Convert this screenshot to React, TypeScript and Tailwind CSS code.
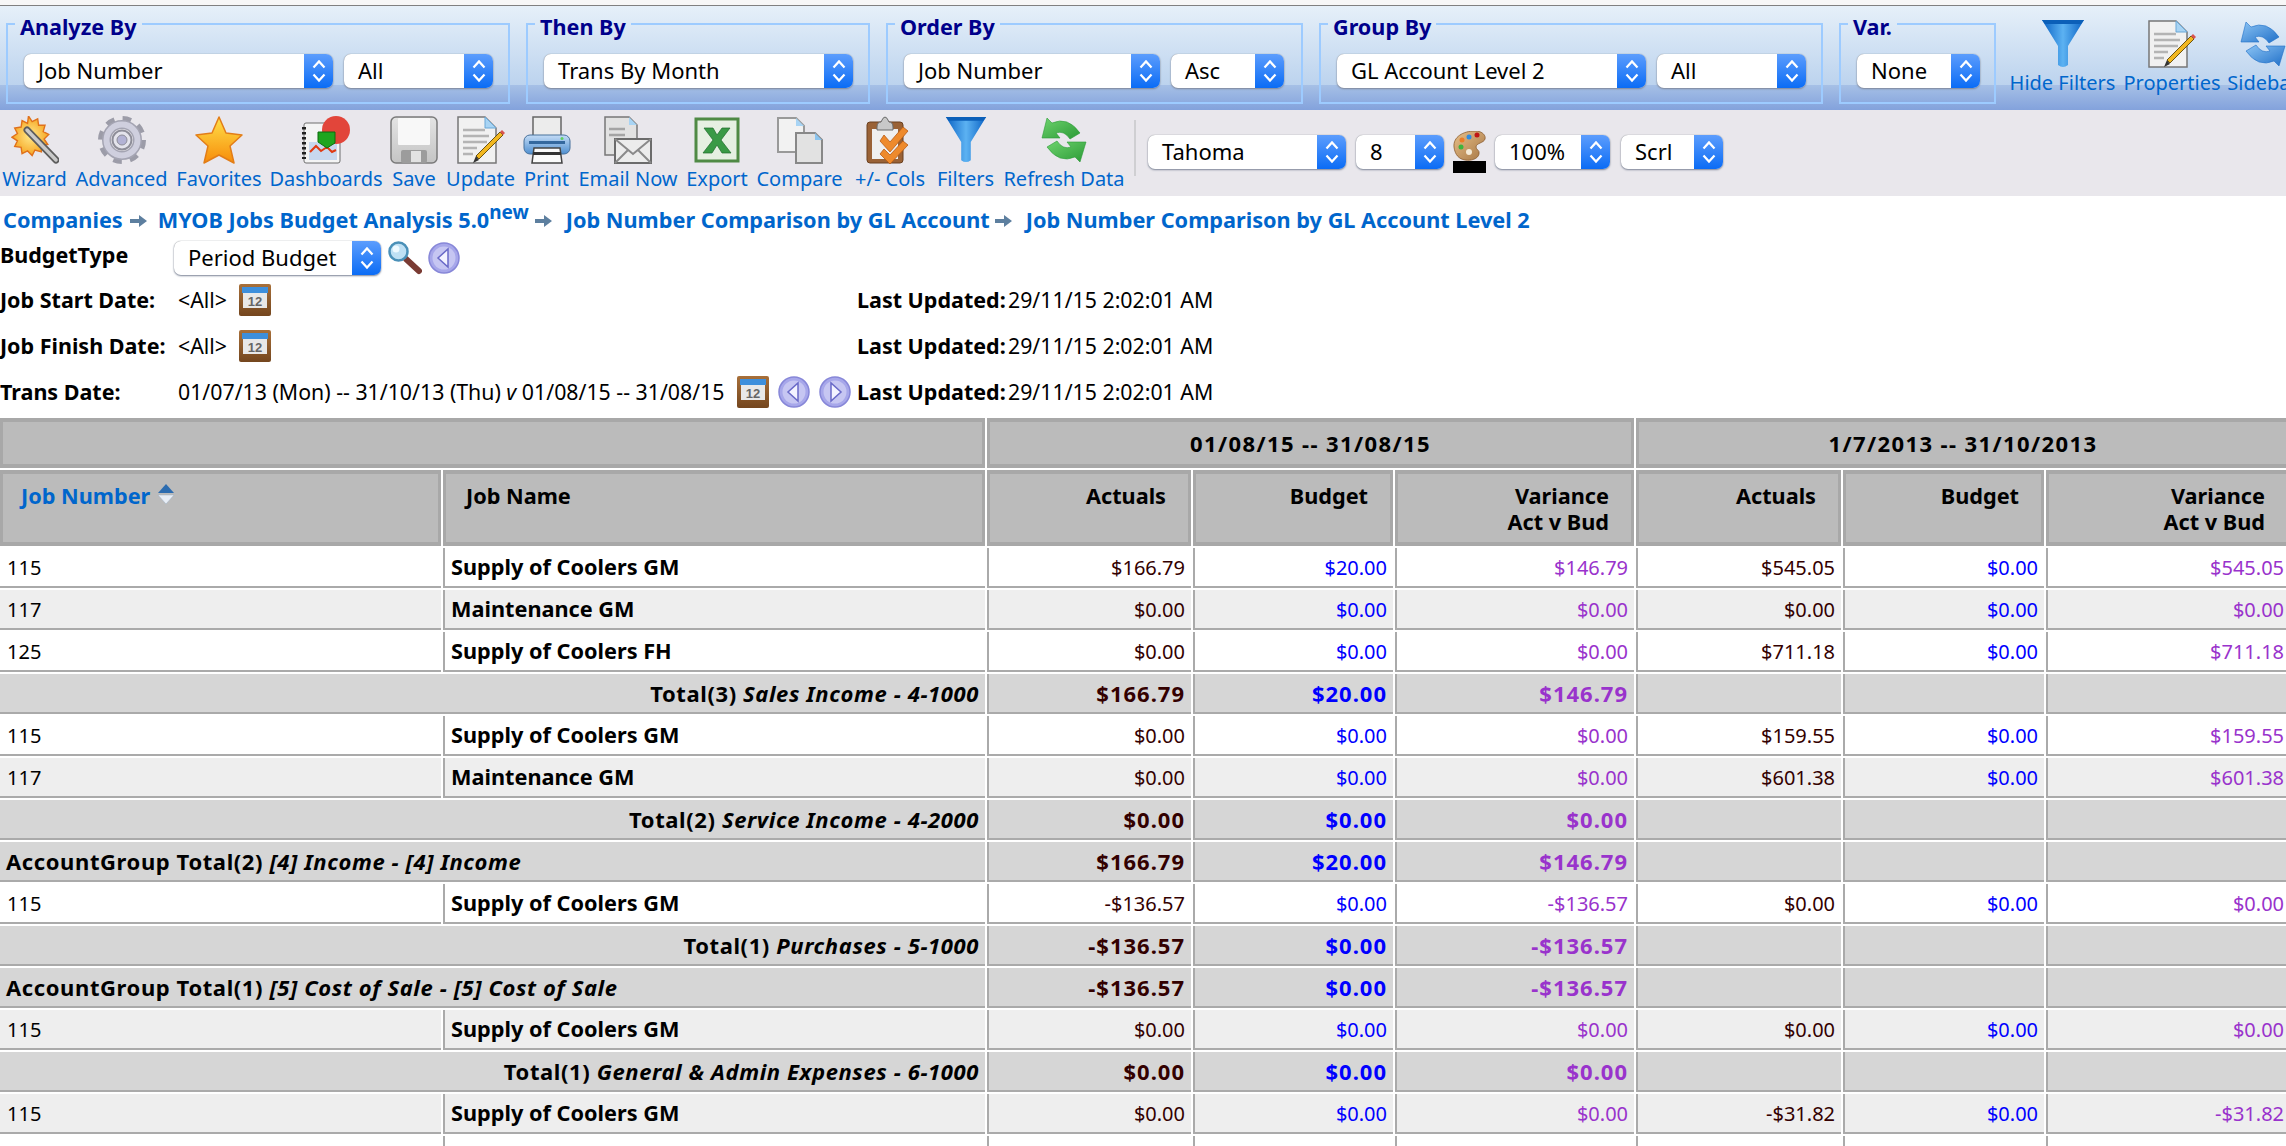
import type { ReactNode } from "react";

const Chevrons = () => (
  <svg viewBox="0 0 16 26" className="w-[16px] h-[26px]" fill="none" stroke="#fff" strokeWidth="2.2">
    <path d="M2.5 9.5 8 3.5l5.5 6M2.5 16.5 8 22.5l5.5-6" />
  </svg>
);

function Select({ label, className }: { label: string; className: string }) {
  return (
    <div className={`flex h-[34px] shrink-0 rounded-[7px] bg-white shadow-[0_1px_2px_#7d8699,0_0_1px_#8a8a8a] overflow-hidden ${className}`}>
      <span className="flex-1 pl-[14px] text-[22px] leading-[32px] text-black whitespace-nowrap overflow-hidden">{label}</span>
      <span className="w-[29px] flex items-center justify-center bg-[linear-gradient(180deg,#5c9dfd,#0b6cf5)]">
        <Chevrons />
      </span>
    </div>
  );
}

function Group({ title, width, children }: { title: string; width: string; children: ReactNode }) {
  return (
    <fieldset className={`${width} h-[95px] min-w-0 shrink-0 border-2 border-[#9dcbff] pl-[16px] pt-[15px] flex`}>
      <legend className="-ml-[9px] px-[5px] pt-[6px] text-[21.6px] leading-[24px] font-bold text-[#00008b] whitespace-nowrap">{title}</legend>
      <div className="flex gap-[11px]">{children}</div>
    </fieldset>
  );
}

const FunnelIcon = ({ size = 48 }: { size?: number }) => (
  <svg viewBox="0 0 48 48" width={size} height={size}>
    <defs>
      <linearGradient id="fun" x1="0" x2="1" y1="0" y2="0">
        <stop offset="0" stopColor="#0a62c4" />
        <stop offset=".5" stopColor="#5cb2f2" />
        <stop offset="1" stopColor="#0a62c4" />
      </linearGradient>
    </defs>
    <path d="M3 0h42L29 26v19q-5 4-10 0V26Z" fill="url(#fun)" />
    <path d="M3 0h42l-3 4H6Z" fill="#0b5fb8" />
  </svg>
);

const WizardIcon = () => (
  <svg viewBox="0 0 48 48" width="48" height="48">
    <defs>
      <radialGradient id="wz"><stop offset="0" stopColor="#ffe98a" /><stop offset="1" stopColor="#f6a623" /></radialGradient>
    </defs>
    <path d="M19 0l4 6 6-3 1 7 7 0-2 7 6 3-5 5 4 6-7 1 0 7-7-2-3 6-5-5-6 3-1-7-7-1 3-6-6-4 6-4-3-6 7-1 1-7 6 3Z" fill="url(#wz)" stroke="#e0711b" strokeWidth="1.5" transform="scale(.92)" />
    <path d="M16 14 45 44" stroke="#5d5d5d" strokeWidth="7" strokeLinecap="round" />
    <path d="M16 14 45 44" stroke="#c9c9c9" strokeWidth="3.5" strokeLinecap="round" />
  </svg>
);

const GearIcon = () => (
  <svg viewBox="0 0 48 48" width="48" height="48" fill="none">
    <circle cx="24" cy="24" r="20" stroke="#9c9ca8" strokeWidth="8" strokeDasharray="8 7.7" />
    <circle cx="24" cy="24" r="15.5" stroke="#a4a4b2" strokeWidth="9" />
    <circle cx="24" cy="24" r="15.5" stroke="#cfcfde" strokeWidth="6" />
    <circle cx="24" cy="24" r="9.5" stroke="#8d8d98" strokeWidth="2" fill="#e4e4ec" />
    <circle cx="24" cy="24" r="5" fill="#b2b2d4" stroke="#8d8d98" />
  </svg>
);

const StarIcon = () => (
  <svg viewBox="0 0 48 48" width="48" height="48">
    <defs>
      <linearGradient id="st" x1="0" x2="0" y1="0" y2="1"><stop offset="0" stopColor="#ffe14a" /><stop offset="1" stopColor="#f78c0a" /></linearGradient>
    </defs>
    <path d="M24 1l7 16 16 2-12 11 4 17-15-8-15 8 4-17L1 19l16-2Z" fill="url(#st)" stroke="#e27d18" strokeWidth="1.5" strokeLinejoin="round" />
  </svg>
);

const DashIcon = () => (
  <svg viewBox="0 0 48 48" width="48" height="48">
    <rect x="2" y="7" width="36" height="40" rx="2" fill="#f4f4f4" stroke="#6f6f6f" />
    <path d="M2 11v32" stroke="#222" strokeWidth="4" strokeDasharray="2.5 2.5" />
    <rect x="7" y="26" width="28" height="18" fill="#c8d8ee" />
    <path d="M8 36l6-6 5 5 6-4 5 5 4-2" stroke="#e03a12" strokeWidth="2" fill="none" />
    <circle cx="34" cy="14" r="14" fill="#e2453a" />
    <path d="M16 16h17v11l-8 5-9-6Z" fill="#1fa51f" stroke="#0d6d0d" />
  </svg>
);

const SaveIcon = () => (
  <svg viewBox="0 0 48 48" width="48" height="48">
    <defs>
      <linearGradient id="sv" x1="0" x2="0" y1="0" y2="1"><stop offset="0" stopColor="#e4e4e4" /><stop offset="1" stopColor="#c4c4c4" /></linearGradient>
    </defs>
    <rect x="1" y="1" width="46" height="46" rx="5" fill="url(#sv)" stroke="#7a7a7a" strokeWidth="1.5" />
    <rect x="8" y="2" width="32" height="27" rx="1" fill="#f8f8f8" />
    <rect x="11" y="34" width="26" height="13" rx="2" fill="#9c9c9c" />
    <rect x="21" y="35" width="10" height="11" fill="#e2e2e2" />
  </svg>
);

const Pencil = () => (
  <g>
    <path d="M46 19 22 43l-3-3L43 16Z" fill="#f2b71f" stroke="#6b5412" strokeWidth="1" />
    <path d="M43 16l3 3 2-2-3-3Z" fill="#d9534f" />
    <path d="M19 40l-3 7 6-3Z" fill="#333" />
  </g>
);

const DocBody = ({ x = 1, w = 38, h = 46 }: { x?: number; w?: number; h?: number }) => (
  <g>
    <path d={`M${x} 1h${w - 11}l11 11v${h - 11}h-${w}Z`} fill="#f1f1f1" stroke="#777" strokeWidth="1.5" />
    <path d={`M${x + w - 11} 1l11 11h-11Z`} fill="#a8d4f4" stroke="#6aa7d6" />
  </g>
);

const DocIcon = () => (
  <svg viewBox="0 0 48 48" width="48" height="48">
    <DocBody />
    <path d="M6 14h22M6 20h26M6 26h24M6 32h14M6 38h10" stroke="#b4b4b4" strokeWidth="2.5" />
    <Pencil />
  </svg>
);

const PrintIcon = () => (
  <svg viewBox="0 0 48 48" width="48" height="48">
    <defs>
      <linearGradient id="pr" x1="0" x2="0" y1="0" y2="1"><stop offset="0" stopColor="#c4dcf6" /><stop offset="1" stopColor="#4f8fd0" /></linearGradient>
    </defs>
    <rect x="10" y="1" width="28" height="20" fill="#ececec" stroke="#666" strokeWidth="1.5" />
    <rect x="1" y="19" width="46" height="19" rx="6" fill="url(#pr)" stroke="#47709b" />
    <rect x="6" y="25" width="36" height="3" fill="#34689e" />
    <circle cx="39" cy="22.5" r="1.5" fill="#5fcf5f" />
    <path d="M11 32h26l2 15H9Z" fill="#fafafa" stroke="#444" strokeWidth="1.5" />
    <rect x="10" y="36" width="28" height="3" fill="#333" />
  </svg>
);

const MailIcon = () => (
  <svg viewBox="0 0 48 48" width="48" height="48">
    <path d="M1 1h24l8 8v30H1Z" fill="#e2e2e2" stroke="#777" strokeWidth="1.5" />
    <path d="M25 1l8 8h-8Z" fill="#a8d4f4" />
    <path d="M5 13h16M5 19h16" stroke="#a4a4a4" strokeWidth="2.5" />
    <rect x="11" y="23" width="36" height="24" fill="#ececec" stroke="#6b6b6b" strokeWidth="2" />
    <path d="M11 23l18 15 18-15M11 47l13-13M47 47 34 34" fill="none" stroke="#8a8a8a" strokeWidth="2" />
  </svg>
);

const ExcelIcon = () => (
  <svg viewBox="0 0 48 48" width="48" height="48">
    <rect x="3" y="3" width="42" height="42" fill="#e6f0e2" stroke="#4f8a44" strokeWidth="3" />
    <path d="M11 12h9l4 7 5-7h8l-9 12 10 13h-9l-5-8-5 8h-9l10-13Z" fill="#3a9a46" stroke="#1f6a2b" strokeWidth=".7" />
  </svg>
);

const CompareIcon = () => (
  <svg viewBox="0 0 48 48" width="48" height="48">
    <path d="M2 2h18l8 8v26H2Z" fill="#f2f2f2" stroke="#999" strokeWidth="2" />
    <path d="M20 2l8 8h-8Z" fill="#a8d4f4" />
    <path d="M20 17h19l7 7v23H20Z" fill="#e2e2e2" stroke="#888" strokeWidth="2" />
    <path d="M39 17l7 7h-7Z" fill="#8cc4ee" />
  </svg>
);

const ClipIcon = () => (
  <svg viewBox="0 0 48 48" width="48" height="48">
    <rect x="1" y="6" width="36" height="41" rx="3" fill="#9a6236" stroke="#6b4120" />
    <rect x="6" y="13" width="26" height="30" fill="#efefef" />
    <path d="M11 11q0-5 4-5 2-5 4-5t4 5q4 0 4 5v3H11Z" fill="#c8c8c8" stroke="#6a6a6a" />
    <path d="M18 19l6 7 13-15 5 4-18 21-10-11Z" fill="#ee8a2c" stroke="#b85c15" strokeWidth=".8" />
    <path d="M18 33l6 6 13-14 5 4-18 19-10-10Z" fill="#ee8a2c" stroke="#b85c15" strokeWidth=".8" />
  </svg>
);

function RefreshIcon({ dark, light, id }: { dark: string; light: string; id: string }) {
  return (
    <svg viewBox="0 0 48 48" width="48" height="48">
      <defs>
        <linearGradient id={id} x1="0" x2="1" y1="0" y2="1"><stop offset="0" stopColor={light} /><stop offset="1" stopColor={dark} /></linearGradient>
      </defs>
      <path d="M2 22 7 2l5 5q16-7 28 10l-10 6q-6-9-14-6l4 5Z" fill={`url(#${id})`} stroke={dark} strokeWidth=".6" />
      <path d="M46 26l-6 20-5-5q-16 7-28-10l10-6q6 9 14 6l-4-5Z" fill={`url(#${id})`} stroke={dark} strokeWidth=".6" />
    </svg>
  );
}

const PaletteIcon = () => (
  <svg viewBox="0 0 33 30" width="33" height="30">
    <defs>
      <linearGradient id="pal" x1="0" x2="1" y1="0" y2="1"><stop offset="0" stopColor="#e8c08a" /><stop offset="1" stopColor="#a67644" /></linearGradient>
    </defs>
    <path d="M1 16C0 6 10 0 22 0c8 0 11 5 10 8-1 4-9 4-9 8 0 3 4 3 3 7-1 5-8 7-14 6C6 28 2 24 1 16Z" fill="url(#pal)" stroke="#8a5c2e" strokeWidth=".8" />
    <circle cx="9" cy="9" r="2.5" fill="#ec7c26" />
    <circle cx="16" cy="6" r="2.5" fill="#2f8be0" />
    <circle cx="24" cy="4" r="2.5" fill="#c01616" />
    <circle cx="8" cy="16" r="2.5" fill="#3cb43c" />
    <circle cx="16" cy="21" r="3" fill="#f4ead8" />
  </svg>
);

const CalIcon = () => (
  <svg viewBox="0 0 32 32" width="32" height="32" className="shrink-0 ml-[3px]">
    <defs>
      <linearGradient id="calb" x1="0" x2="0" y1="0" y2="1"><stop offset="0" stopColor="#a8703a" /><stop offset="1" stopColor="#74461e" /></linearGradient>
    </defs>
    <rect x="0" y="0" width="32" height="32" rx="2" fill="url(#calb)" />
    <rect x="3" y="3" width="26" height="6" fill="#3d8fdc" />
    <rect x="4" y="9" width="24" height="15" fill="#e8e8e8" />
    <text x="16" y="22" textAnchor="middle" fontSize="13" fontWeight="700" fill="#666" fontFamily="Liberation Sans, sans-serif">12</text>
  </svg>
);

const MagIcon = () => (
  <svg viewBox="0 0 34 34" width="34" height="34" className="shrink-0">
    <path d="M18 18 31 30" stroke="#7a3b33" strokeWidth="6" strokeLinecap="round" />
    <circle cx="10.5" cy="10.5" r="9" fill="#bfe0f4" stroke="#4a90b8" strokeWidth="2.5" />
    <circle cx="8" cy="8" r="3.5" fill="#eef9ff" />
  </svg>
);

const CircleArrow = ({ dir }: { dir: "l" | "r" }) => (
  <svg viewBox="0 0 32 32" width="32" height="32" className="shrink-0">
    <circle cx="16" cy="16" r="15" fill="#a7a7ea" stroke="#8787d8" strokeWidth="1.5" />
    <circle cx="16" cy="16" r="11.5" fill="#c6c6f2" />
    <path d={dir === "l" ? "M20 7v18L10 16Z" : "M12 7v18l10-9Z"} fill="#f3f3ff" stroke="#6a6ac8" strokeWidth="1.5" />
  </svg>
);

const CrumbArrow = () => (
  <svg viewBox="0 0 17 12" width="17" height="12" className="shrink-0">
    <path d="M0 4h9V0l8 6-8 6V8H0Z" fill="#5d7f9f" />
  </svg>
);

const SortArrows = () => (
  <svg viewBox="0 0 18 20" width="18" height="20" className="ml-[7px] -mt-[4px] shrink-0">
    <path d="M9 0l8 9H1Z" fill="#2c6cb0" />
    <path d="M1 11h16l-8 9Z" fill="#e8eef6" stroke="#9fb0c4" strokeWidth=".5" />
  </svg>
);

function ToolBtn({ icon, label, width }: { icon: ReactNode; label: string; width: string }) {
  return (
    <div className={`${width} shrink-0 flex flex-col items-center`}>
      <div className="h-[48px] flex items-center justify-center">{icon}</div>
      <span className="mt-[1px] text-[20px] leading-[28px] text-[#0066cc] whitespace-nowrap">{label}</span>
    </div>
  );
}

const CRUMB = "text-[21.7px] font-bold text-[#0066cc] whitespace-nowrap";

function InfoRow({ label, children }: { label: string; children: ReactNode }) {
  return (
    <div className="flex items-center h-[46px] text-[21.3px] text-black whitespace-nowrap">
      <span className="w-[178px] shrink-0 font-bold text-[21.5px]">{label}</span>
      <span className="w-[679px] shrink-0 flex items-center gap-[9px]">{children}</span>
      <span className="font-bold w-[151px] text-[21.5px]">Last Updated:</span>
      <span>29/11/15 2:02:01 AM</span>
    </div>
  );
}

type Row =
  | { kind: "data"; alt?: boolean; job: string; name: string; a: string[]; b?: string[] }
  | { kind: "total"; left?: boolean; head: string; tail: string; a: string[] };

const rows: Row[] = [
  { kind: "data", job: "115", name: "Supply of Coolers GM", a: ["$166.79", "$20.00", "$146.79"], b: ["$545.05", "$0.00", "$545.05"] },
  { kind: "data", alt: true, job: "117", name: "Maintenance GM", a: ["$0.00", "$0.00", "$0.00"], b: ["$0.00", "$0.00", "$0.00"] },
  { kind: "data", job: "125", name: "Supply of Coolers FH", a: ["$0.00", "$0.00", "$0.00"], b: ["$711.18", "$0.00", "$711.18"] },
  { kind: "total", head: "Total(3)", tail: "Sales Income - 4-1000", a: ["$166.79", "$20.00", "$146.79"] },
  { kind: "data", job: "115", name: "Supply of Coolers GM", a: ["$0.00", "$0.00", "$0.00"], b: ["$159.55", "$0.00", "$159.55"] },
  { kind: "data", alt: true, job: "117", name: "Maintenance GM", a: ["$0.00", "$0.00", "$0.00"], b: ["$601.38", "$0.00", "$601.38"] },
  { kind: "total", head: "Total(2)", tail: "Service Income - 4-2000", a: ["$0.00", "$0.00", "$0.00"] },
  { kind: "total", left: true, head: "AccountGroup Total(2)", tail: "[4] Income - [4] Income", a: ["$166.79", "$20.00", "$146.79"] },
  { kind: "data", job: "115", name: "Supply of Coolers GM", a: ["-$136.57", "$0.00", "-$136.57"], b: ["$0.00", "$0.00", "$0.00"] },
  { kind: "total", head: "Total(1)", tail: "Purchases - 5-1000", a: ["-$136.57", "$0.00", "-$136.57"] },
  { kind: "total", left: true, head: "AccountGroup Total(1)", tail: "[5] Cost of Sale - [5] Cost of Sale", a: ["-$136.57", "$0.00", "-$136.57"] },
  { kind: "data", alt: true, job: "115", name: "Supply of Coolers GM", a: ["$0.00", "$0.00", "$0.00"], b: ["$0.00", "$0.00", "$0.00"] },
  { kind: "total", head: "Total(1)", tail: "General & Admin Expenses - 6-1000", a: ["$0.00", "$0.00", "$0.00"] },
  { kind: "data", alt: true, job: "115", name: "Supply of Coolers GM", a: ["$0.00", "$0.00", "$0.00"], b: ["-$31.82", "$0.00", "-$31.82"] },
];

const VALUE_COLORS = ["text-[#330000]", "text-[#0000ff]", "text-[#9933cc]"];
const TH = "align-top border-x-[3px] border-y-4 border-[#a8a8a8] bg-[#bbbbbb] text-[21.7px] leading-[26px] font-bold text-black";
const TD = "border-b-2 border-[#aaaaaa] h-[40px] p-0 text-[20px] leading-[24px] whitespace-nowrap";

function Values({ vals, bg, bold }: { vals: string[]; bg: string; bold?: boolean }) {
  return (
    <>
      {vals.map((v, i) => (
        <td key={i} className={`${TD} ${bg} border-l-2 text-right pr-[6px] ${VALUE_COLORS[i]} ${bold ? "font-bold text-[22px] tracking-[1px]" : "pt-[1px]"}`}>
          {v}
        </td>
      ))}
    </>
  );
}

function BlankCells({ bg }: { bg: string }) {
  return (
    <>
      {[0, 1, 2].map((i) => (
        <td key={i} className={`${TD} ${bg} border-l-2`} />
      ))}
    </>
  );
}

export default function App() {
  return (
    <div className="w-[2286px] h-[1146px] overflow-hidden bg-white font-['Noto_Sans','DejaVu_Sans',sans-serif]">
      <div className="h-[5px] bg-[#f7f7f7]" />
      <div className="h-[1px] bg-[#808080]" />

      <div className="h-[104px] flex gap-[16px] pl-[6px] pt-[3px] bg-[linear-gradient(180deg,#e6f0f9_0%,#bcd3ee_76%,#a6c0e6_76%,#83a2dc_100%)]">
        <Group title="Analyze By" width="w-[504px]">
          <Select label="Job Number" className="w-[309px]" />
          <Select label="All" className="w-[149px]" />
        </Group>
        <Group title="Then By" width="w-[344px]">
          <Select label="Trans By Month" className="w-[309px]" />
        </Group>
        <Group title="Order By" width="w-[417px]">
          <Select label="Job Number" className="w-[256px]" />
          <Select label="Asc" className="w-[113px]" />
        </Group>
        <Group title="Group By" width="w-[504px]">
          <Select label="GL Account Level 2" className="w-[309px]" />
          <Select label="All" className="w-[149px]" />
        </Group>
        <Group title="Var." width="w-[157px]">
          <Select label="None" className="w-[123px]" />
        </Group>
        <div className="flex gap-[8px] -ml-[3px] pt-[11px]">
          <ToolBtn icon={<FunnelIcon />} label="Hide Filters" width="w-[107px]" />
          <ToolBtn icon={<DocIcon />} label="Properties" width="w-[96px]" />
          <ToolBtn icon={<RefreshIcon id="side" light="#8cc4f4" dark="#1f6fc8" />} label="Sidebar" width="w-[70px]" />
        </div>
      </div>

      <div className="h-[86px] flex bg-[#e9e7ec] pl-[3px] pt-[6px]">
        <div className="flex gap-[10px]">
          <ToolBtn icon={<WizardIcon />} label="Wizard" width="w-[63px]" />
          <ToolBtn icon={<GearIcon />} label="Advanced" width="w-[91px]" />
          <ToolBtn icon={<StarIcon />} label="Favorites" width="w-[84px]" />
          <ToolBtn icon={<DashIcon />} label="Dashboards" width="w-[110px]" />
          <ToolBtn icon={<SaveIcon />} label="Save" width="w-[46px]" />
          <ToolBtn icon={<DocIcon />} label="Update" width="w-[67px]" />
          <ToolBtn icon={<PrintIcon />} label="Print" width="w-[45px]" />
          <ToolBtn icon={<MailIcon />} label="Email Now" width="w-[98px]" />
          <ToolBtn icon={<ExcelIcon />} label="Export" width="w-[60px]" />
          <ToolBtn icon={<CompareIcon />} label="Compare" width="w-[85px]" />
          <ToolBtn icon={<ClipIcon />} label="+/- Cols" width="w-[76px]" />
          <ToolBtn icon={<FunnelIcon size={46} />} label="Filters" width="w-[55px]" />
          <ToolBtn icon={<RefreshIcon id="ref" light="#6fd36f" dark="#2a9a35" />} label="Refresh Data" width="w-[122px]" />
        </div>
        <div className="w-[2px] h-[56px] bg-[#cfcfd2] ml-[9px] mt-[4px]" />
        <div className="flex items-start pt-[19px] ml-[12px]">
          <Select label="Tahoma" className="w-[198px]" />
          <Select label="8" className="w-[88px] ml-[10px]" />
          <div className="w-[33px] ml-[9px] -mt-[4px] flex flex-col">
            <PaletteIcon />
            <div className="h-[12px] bg-black" />
          </div>
          <Select label="100%" className="w-[115px] ml-[9px]" />
          <Select label="Scrl" className="w-[102px] ml-[11px]" />
        </div>
      </div>

      <div className="h-[43px] flex items-center pl-[3px] pt-[6px]">
        <span className={CRUMB}>Companies</span>
        <span className="ml-[7px]"><CrumbArrow /></span>
        <span className={`${CRUMB} ml-[11px]`}>
          MYOB Jobs Budget Analysis 5.0<sup className="text-[19px]">new</sup>
        </span>
        <span className="ml-[6px]"><CrumbArrow /></span>
        <span className={`${CRUMB} ml-[14px]`}>Job Number Comparison by GL Account</span>
        <span className="ml-[5px]"><CrumbArrow /></span>
        <span className={`${CRUMB} ml-[14px]`}>Job Number Comparison by GL Account Level 2</span>
      </div>

      <div className="h-[38px] flex items-center text-[21.5px] text-black">
        <span className="w-[174px] font-bold -mt-[6px]">BudgetType</span>
        <Select label="Period Budget" className="w-[207px]" />
        <span className="ml-[7px]"><MagIcon /></span>
        <span className="ml-[6px]"><CircleArrow dir="l" /></span>
      </div>

      <InfoRow label="Job Start Date:">
        <span>&lt;All&gt;</span>
        <CalIcon />
      </InfoRow>
      <InfoRow label="Job Finish Date:">
        <span>&lt;All&gt;</span>
        <CalIcon />
      </InfoRow>
      <InfoRow label="Trans Date:">
        <span>
          01/07/13 (Mon) -- 31/10/13 (Thu) <i>v</i> 01/08/15 -- 31/08/15
        </span>
        <CalIcon />
        <CircleArrow dir="l" />
        <CircleArrow dir="r" />
      </InfoRow>

      <table className="table-fixed border-separate border-spacing-[2px] -ml-[2px] w-[2294px] mt-[1px]">
        <colgroup>
          <col className="w-[441px]" />
          <col className="w-[542px]" />
          <col className="w-[204px]" />
          <col className="w-[200px]" />
          <col className="w-[239px]" />
          <col className="w-[205px]" />
          <col className="w-[201px]" />
          <col className="w-[244px]" />
        </colgroup>
        <thead>
          <tr>
            <th colSpan={2} className={`${TH} h-[50px]`} />
            <th colSpan={3} className={`${TH} h-[50px] pt-[8px] text-center text-[22px] tracking-[1.4px]`}>01/08/15 -- 31/08/15</th>
            <th colSpan={3} className={`${TH} h-[50px] pt-[8px] text-center text-[22px] tracking-[1.4px]`}>1/7/2013 -- 31/10/2013</th>
          </tr>
          <tr>
            <th className={`${TH} h-[76px] pt-[9px] text-left pl-[18px]`}>
              <span className="flex items-center">
                <span className="text-[#0066cc]">Job Number</span>
                <SortArrows />
              </span>
            </th>
            <th className={`${TH} h-[76px] pt-[9px] text-left pl-[20px]`}>Job Name</th>
            {["Actuals", "Budget", "Variance", "Actuals", "Budget", "Variance"].map((h, i) => (
              <th key={i} className={`${TH} h-[76px] pt-[9px] text-right pr-[22px]`}>
                {h}
                {h === "Variance" && (
                  <>
                    <br />
                    Act v Bud
                  </>
                )}
              </th>
            ))}
          </tr>
        </thead>
        <tbody>
          {rows.map((r, i) => {
            if (r.kind === "data") {
              const bg = r.alt ? "bg-[#eeeeee]" : "bg-white";
              return (
                <tr key={i}>
                  <td className={`${TD} ${bg} pl-[7px] pt-[1px] text-black`}>{r.job}</td>
                  <td className={`${TD} ${bg} border-l-2 pl-[6px] font-bold text-[21.7px] text-black`}>{r.name}</td>
                  <Values vals={r.a} bg={bg} />
                  {r.b && <Values vals={r.b} bg={bg} />}
                </tr>
              );
            }
            return (
              <tr key={i}>
                <td colSpan={2} className={`${TD} bg-[#d6d6d6] font-bold text-[22px] tracking-[0.6px] text-black ${r.left ? "text-left pl-[6px]" : "text-right pr-[6px]"}`}>
                  {r.head} <i>{r.tail}</i>
                </td>
                <Values vals={r.a} bg="bg-[#d6d6d6]" bold />
                <BlankCells bg="bg-[#d6d6d6]" />
              </tr>
            );
          })}
          <tr>
            <td className={`${TD} bg-white`} />
            <td className={`${TD} bg-white border-l-2`} />
            <BlankCells bg="bg-white" />
            <BlankCells bg="bg-white" />
          </tr>
        </tbody>
      </table>
    </div>
  );
}
